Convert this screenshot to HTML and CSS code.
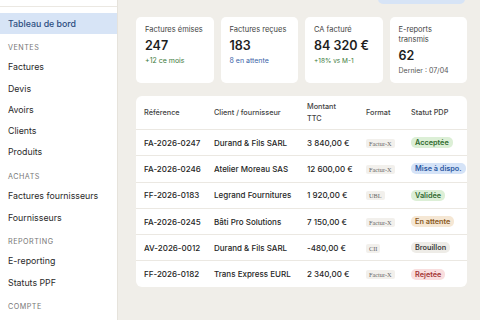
FILE: index.html
```html
<!DOCTYPE html>
<html lang="fr">
<head>
<meta charset="utf-8">
<link rel="stylesheet" href="styles.css">
</head>
<body>
<div class="app">
  <aside class="sidebar">
    <div class="brand"></div>
    <nav class="nav">
      <a class="item active">Tableau de bord</a>
      <div class="section">Ventes</div>
      <a class="item">Factures</a>
      <a class="item">Devis</a>
      <a class="item">Avoirs</a>
      <a class="item">Clients</a>
      <a class="item">Produits</a>
      <div class="section">Achats</div>
      <a class="item">Factures fournisseurs</a>
      <a class="item">Fournisseurs</a>
      <div class="section">Reporting</div>
      <a class="item">E-reporting</a>
      <a class="item">Statuts PPF</a>
      <div class="section">Compte</div>
    </nav>
  </aside>
  <main class="main">
    <div class="topbar"><span class="btn"></span></div>
    <section class="stats">
      <div class="card">
        <div class="label">Factures émises</div>
        <div class="value">247</div>
        <div class="sub green">+12 ce mois</div>
      </div>
      <div class="card">
        <div class="label">Factures reçues</div>
        <div class="value">183</div>
        <div class="sub blue">8 en attente</div>
      </div>
      <div class="card">
        <div class="label">CA facturé</div>
        <div class="value">84 320 €</div>
        <div class="sub green small">+18% vs M-1</div>
      </div>
      <div class="card">
        <div class="label">E-reports<br>transmis</div>
        <div class="value">62</div>
        <div class="sub gray">Dernier : 07/04</div>
      </div>
    </section>
    <section class="table-card">
      <table class="tbl">
        <colgroup>
          <col class="c1"><col class="c2"><col class="c3"><col class="c4"><col class="c5">
        </colgroup>
        <thead>
          <tr><th>Référence</th><th>Client / fournisseur</th><th>Montant<br>TTC</th><th>Format</th><th>Statut PDP</th></tr>
        </thead>
        <tbody>
          <tr><td>FA-2026-0247</td><td>Durand &amp; Fils SARL</td><td>3 840,00 €</td><td><span class="fmt">Factur-X</span></td><td><span class="pill ok">Acceptée</span></td></tr>
          <tr><td>FA-2026-0246</td><td>Atelier Moreau SAS</td><td>12 600,00 €</td><td><span class="fmt">Factur-X</span></td><td><span class="pill info">Mise à dispo.</span></td></tr>
          <tr><td>FF-2026-0183</td><td>Legrand Fournitures</td><td>1 920,00 €</td><td><span class="fmt">UBL</span></td><td><span class="pill ok">Validée</span></td></tr>
          <tr><td>FA-2026-0245</td><td>Bâti Pro Solutions</td><td>7 150,00 €</td><td><span class="fmt">Factur-X</span></td><td><span class="pill wait">En attente</span></td></tr>
          <tr><td>AV-2026-0012</td><td>Durand &amp; Fils SARL</td><td>-480,00 €</td><td><span class="fmt">CII</span></td><td><span class="pill draft">Brouillon</span></td></tr>
          <tr><td>FF-2026-0182</td><td>Trans Express EURL</td><td>2 340,00 €</td><td><span class="fmt">Factur-X</span></td><td><span class="pill err">Rejetée</span></td></tr>
        </tbody>
      </table>
    </section>
  </main>
</div>
</body>
</html>
```

FILE: styles.css
```css
* { box-sizing: border-box; }
html, body { margin: 0; padding: 0; }
body {
  width: 480px;
  height: 320px;
  overflow: hidden;
  font-family: Inter, "Noto Sans", sans-serif;
  background: #f0eee9;
  color: #222;
}
.app { display: flex; height: 320px; }
.sidebar {
  width: 118px;
  flex: none;
  background: #fff;
  border-right: 1px solid #e6e3dc;
}
.brand { height: 7px; border-bottom: 1px solid #ebe8e2; }
.nav { display: flex; flex-direction: column; padding-top: 5.5px; }
.item {
  display: block;
  height: 21.3px;
  line-height: 21.3px;
  padding-left: 8px;
  font-size: 8.8px;
  color: #2a2a2a;
  white-space: nowrap;
}
.item.active {
  background: #d7e4f6;
  color: #2b4c80;
  font-weight: 500;
}
.section {
  padding: 9.5px 0 3px 8px;
  line-height: 10px;
  font-size: 7.2px;
  letter-spacing: 0.5px;
  text-transform: uppercase;
  color: #777;
}
.main {
  flex: 1;
  padding: 0 13px 0 18px;
  display: flex;
  flex-direction: column;
}
.topbar { display: flex; justify-content: flex-end; padding-right: 2px; }
.btn {
  display: block;
  margin-top: -18px;
  height: 22px;
  width: 87px;
  border-radius: 5px;
  background: #d7e4f6;
}
.stats {
  margin-top: 13px;
  display: grid;
  grid-template-columns: repeat(4, 1fr);
  gap: 7px;
}
.card {
  background: #fff;
  border-radius: 5px;
  padding: 8px 8px 7px 9px;
  display: flex;
  flex-direction: column;
}
.label { font-size: 7.5px; line-height: 10px; color: #444; }
.value {
  margin-top: 3px;
  font-size: 12.5px;
  line-height: 16px;
  font-weight: 600;
  color: #1e1e1e;
}
.sub { margin-top: 2px; font-size: 7px; line-height: 10px; }
.sub.small { font-size: 6.5px; }
.green { color: #3b7a3b; }
.blue { color: #3a63a8; }
.gray { color: #555; }
.table-card {
  margin-top: 13px;
  background: #fff;
  border-radius: 6px;
  overflow: hidden;
}
.tbl {
  width: 100%;
  border-collapse: collapse;
  table-layout: fixed;
}
.c1 { width: 70px; }
.c2 { width: 93px; }
.c3 { width: 59px; }
.c4 { width: 45px; }
.c5 { width: 64px; }
.tbl th {
  text-align: left;
  font-weight: 500;
  font-size: 7.3px;
  line-height: 11.5px;
  color: #444;
  padding: 5px 0 5px 8px;
  height: 33px;
  border-bottom: 1px solid #ebe8e2;
}
.tbl td {
  height: 26.3px;
  padding: 0 0 0 8px;
  font-size: 8px;
  font-weight: 500;
  color: #252525;
  white-space: nowrap;
  border-bottom: 1px solid #ebe8e2;
}
.tbl tbody tr:last-child td { border-bottom: none; }
.fmt {
  display: inline-block;
  font-family: "Liberation Serif", serif;
  font-size: 6.3px;
  line-height: 9px;
  padding: 0 3px;
  background: #f2f0ec;
  color: #666;
  border-radius: 2px;
}
.pill {
  display: inline-block;
  font-size: 7.3px;
  font-weight: 600;
  line-height: 11px;
  padding: 0 4px;
  border-radius: 5px;
}
.ok { background: #dcefd6; color: #2f6a2f; }
.info { background: #d5e3f7; color: #2d5aa3; }
.wait { background: #f5e7d4; color: #8a5a1e; }
.draft { background: #eeece7; color: #3d3d3d; }
.err { background: #f9dede; color: #a33434; }
```
